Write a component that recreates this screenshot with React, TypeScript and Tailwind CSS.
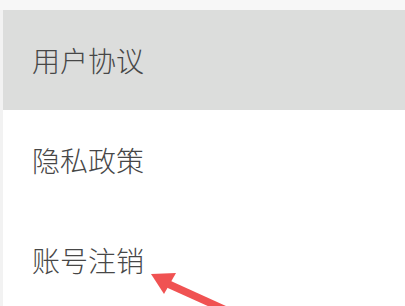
export default function App() {
  const font = { fontFamily: '"Noto Sans CJK SC", "Noto Sans", sans-serif' };
  const rows = ["用户协议", "隐私政策", "账号注销"];
  return (
    <div className="relative w-[405px] h-[306px] overflow-hidden bg-white" style={font}>
      <div className="h-[10px] bg-[#f7f7f7]" />
      <div className="flex">
        <div className="w-[3px] bg-[#f2f2f2]" />
        <div className="flex-1 flex flex-col">
          {rows.map((r, i) => (
            <div
              key={r}
              className={`h-[100px] flex items-center pl-[29px] text-[28px] font-light leading-none text-[#474747] ${i === 0 ? "bg-[#dcdddc]" : "bg-white"}`}
            >
              {r}
            </div>
          ))}
        </div>
      </div>
      <svg className="absolute left-0 top-0" width="405" height="306" viewBox="0 0 405 306">
        <line x1="166" y1="283" x2="250" y2="321" stroke="#f05252" strokeWidth="7.5" />
        <polygon points="151,274 176,273 164,294" fill="#f05252" />
      </svg>
    </div>
  );
}
